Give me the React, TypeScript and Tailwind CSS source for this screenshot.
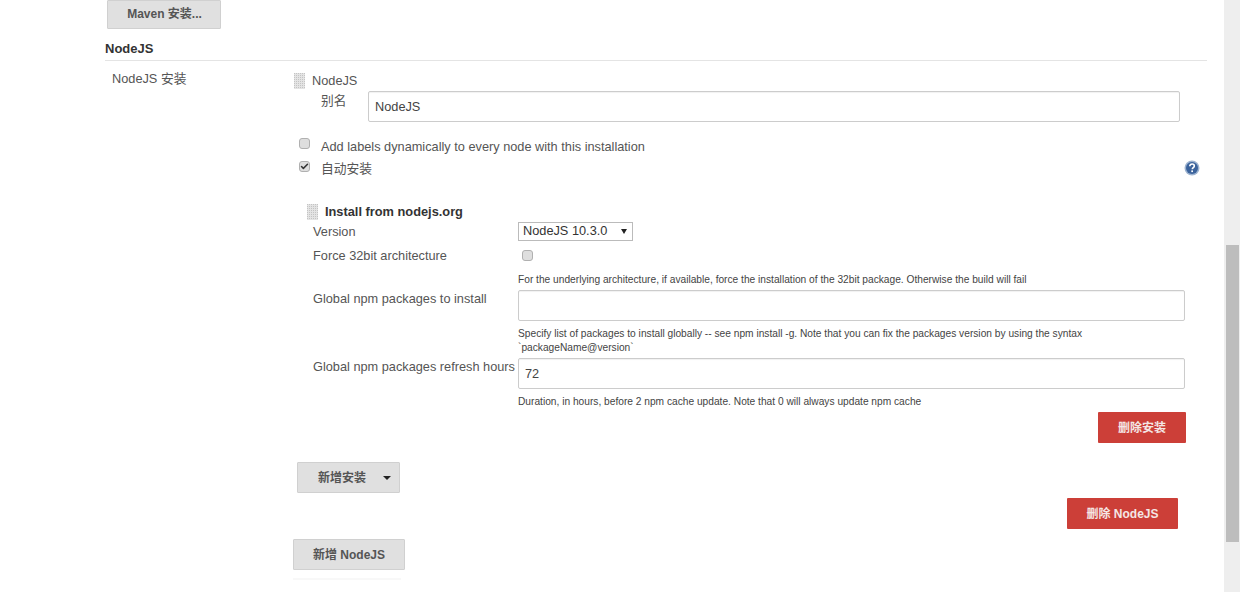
import { Check } from 'lucide-react';

const Grip = ({ className }: { className: string }) => (
  <svg width="11" height="16" viewBox="0 0 11 16" className={className}>
    <defs>
      <pattern id="dots" width="2" height="2" patternUnits="userSpaceOnUse">
        <rect width="2" height="2" fill="#e4e4e4" />
        <rect width="1" height="1" fill="#c4c4c4" />
      </pattern>
    </defs>
    <rect width="11" height="16" fill="url(#dots)" />
  </svg>
);

const CheckBox = ({ checked, className }: { checked?: boolean; className: string }) => (
  <span className={`flex h-[11px] w-[11px] items-center justify-center rounded-[3px] border border-[#b0b0b0] bg-[#dedede] ${className}`}>
    {checked && <Check size={9} strokeWidth={4} className="text-[#333]" />}
  </span>
);

const GrayButton = ({ children, className }: { children: React.ReactNode; className: string }) => (
  <button className={`flex items-center justify-center rounded-[1px] border border-[#d0d0d0] bg-[#e0e0e0] text-[12px] font-bold text-[#555] ${className}`}>
    {children}
  </button>
);

const RedButton = ({ children, className }: { children: React.ReactNode; className: string }) => (
  <button className={`flex items-center justify-center rounded-[1px] bg-[#cc3f38] text-[12px] font-bold text-[#f4e6e4] ${className}`}>
    {children}
  </button>
);

const TextInput = ({ value, className }: { value?: string; className: string }) => (
  <div className={`flex h-[31px] items-center rounded-[2px] border border-[#ccc] bg-white px-[6px] text-[12.75px] text-[#444] shadow-[inset_0_1px_1px_rgba(0,0,0,0.06)] ${className}`}>
    {value}
  </div>
);

const HelpIcon = () => (
  <svg width="16" height="16" viewBox="0 0 16 16" className="mt-[2px]">
    <circle cx="8" cy="8" r="7.5" fill="#9db3d0" />
    <circle cx="8" cy="8" r="6" fill="#3b639c" />
    <path d="M5.8 6.2c0-1.4 1-2.2 2.3-2.2s2.2.8 2.2 2c0 1.7-2 1.7-2 3.3" fill="none" stroke="#fff" strokeWidth="1.6" />
    <rect x="7.3" y="10.4" width="1.7" height="1.7" fill="#fff" />
  </svg>
);

export default function App() {
  return (
    <div className="flex h-[592px] w-[1240px] overflow-hidden bg-white text-[#555]" style={{ fontFamily: '"Liberation Sans", "Noto Sans CJK SC", sans-serif' }}>
      <main className="w-[1224px] pl-[105px] pr-[17px]">
        <GrayButton className="ml-[2px] h-[29px] w-[114px] pb-[1px] pl-[1px]">Maven 安装...</GrayButton>
        <h2 className="mt-[11px] h-[21px] border-b border-[#e4e4e4] text-[13px] font-bold leading-[18px] text-[#333]">NodeJS</h2>

        <div className="flex">
          <div className="ml-[7px] mt-[10px] w-[181px] text-[12.75px] leading-[16px]">NodeJS 安装</div>

          <div className="flex-1">
            <div className="mt-[12px] flex h-[16px] items-center">
              <Grip className="ml-[1px]" />
              <span className="ml-[7px] text-[12.75px]">NodeJS</span>
            </div>
            <div className="mt-[2px] flex">
              <span className="ml-[28px] mt-[1px] w-[47px] text-[12.75px] leading-[18px]">别名</span>
              <TextInput value="NodeJS" className="w-[812px]" />
            </div>

            <div className="mt-[16px] flex h-[11px] items-center">
              <CheckBox className="ml-[6px]" />
              <span className="ml-[11px] mt-[6px] text-[12.75px]">Add labels dynamically to every node with this installation</span>
            </div>
            <div className="mt-[12px] flex h-[11px] items-center pr-[7px]">
              <CheckBox checked className="ml-[6px]" />
              <span className="ml-[11px] mt-[5px] flex-1 text-[12.75px]">自动安装</span>
              <HelpIcon />
            </div>

            <div className="mt-[32px] flex h-[16px] items-center">
              <Grip className="ml-[14px]" />
              <span className="ml-[7px] text-[12.8px] font-bold text-[#333]">Install from nodejs.org</span>
            </div>

            <div className="ml-[20px] mt-[2px] grid w-[872px] grid-cols-[205px_1fr] text-[12.75px]">
              <span className="mt-[2px] leading-[16px]">Version</span>
              <div className="flex h-[19px] w-[115px] items-center justify-between border border-[#bbb] pl-[4px] pr-[5px] leading-none text-[#333]">
                NodeJS 10.3.0
                <span className="h-0 w-0 border-x-[3.5px] border-t-[5px] border-x-transparent border-t-[#222]" />
              </div>

              <span className="mt-[7px] leading-[16px]">Force 32bit architecture</span>
              <CheckBox className="ml-[4px] mt-[9px]" />

              <div className="col-start-2 mt-[9px] text-[10.2px] leading-[14px] text-[#444]">
                For the underlying architecture, if available, force the installation of the 32bit package. Otherwise the build will fail
              </div>

              <span className="mt-[4px] leading-[16px]">Global npm packages to install</span>
              <TextInput className="mt-[3px]" />

              <div className="col-start-2 mt-[6px] text-[10.2px] leading-[14px] text-[#444]">
                Specify list of packages to install globally -- see npm install -g. Note that you can fix the packages version by using the syntax<br />
                `packageName@version`
              </div>

              <span className="mt-[4px] whitespace-nowrap leading-[16px]">Global npm packages refresh hours</span>
              <TextInput value="72" className="mt-[3px]" />

              <div className="col-start-2 mt-[6px] text-[10.2px] leading-[14px] text-[#444]">
                Duration, in hours, before 2 npm cache update. Note that 0 will always update npm cache
              </div>

              <RedButton className="col-start-2 mr-[-1px] mt-[3px] h-[31px] w-[88px] justify-self-end">删除安装</RedButton>
            </div>

            <GrayButton className="ml-[4px] mt-[19px] h-[31px] w-[103px]">
              <span className="ml-[12px]">新增安装</span>
              <span className="ml-[17px] h-0 w-0 border-x-[4px] border-t-[4px] border-x-transparent border-t-[#222]" />
            </GrayButton>

            <div className="mt-[5px] flex justify-end pr-[29px]">
              <RedButton className="h-[31px] w-[111px]">删除 NodeJS</RedButton>
            </div>

            <GrayButton className="mt-[10px] h-[31px] w-[112px]">新增 NodeJS</GrayButton>
            <div className="mt-[8px] h-[2px] w-[108px] bg-[#f8f8f8]" />
          </div>
        </div>
      </main>

      <div className="w-[16px] bg-[#eeeeee] pl-[2px] pr-[1px] pt-[245px]">
        <div className="h-[297px] bg-[#bdbdbd]" />
      </div>
    </div>
  );
}
